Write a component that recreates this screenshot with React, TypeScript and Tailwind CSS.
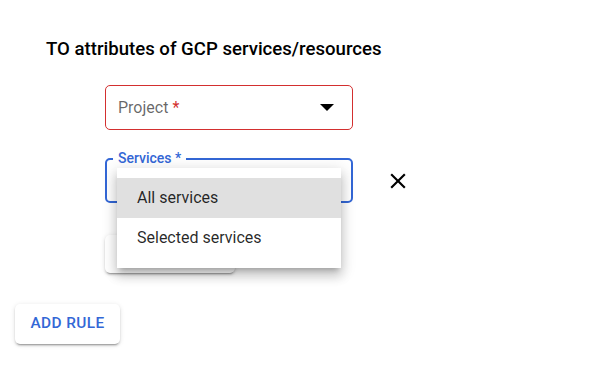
// Rule editor: GCP resource attributes with an open services dropdown
const App = () => {
  return (
    <div className="relative h-[377px] w-[595px] overflow-hidden bg-white font-['Roboto',sans-serif]">
      <div className="pl-[46px] pt-[37px]">
        <h2 className="text-[18.6px] font-medium leading-[25px] text-black">TO attributes of GCP services/resources</h2>
      </div>

      {/* Project select (error state) */}
      <div className="ml-[105px] mt-[23px] flex h-[45px] w-[248px] items-center justify-between rounded-[5px] border border-[#d32f2f] pl-[12px] pr-[18px]">
        <span className="text-[16px] leading-[24px] text-black/60">
          Project <span className="text-[#d32f2f]">*</span>
        </span>
        <svg viewBox="0 0 14 7" className="h-[7px] w-[14px] fill-black">
          <path d="M0 0h14L7 7z" />
        </svg>
      </div>

      {/* Services select (focused) */}
      <div className="ml-[105px] mt-[28px] flex items-center gap-[32px]">
        <div className="relative h-[45px] w-[248px] rounded-[5px] border-2 border-[#3367d6]">
          <span className="absolute left-[6px] top-[-10px] bg-white px-[5px] text-[14px] font-medium leading-[16px] text-[#3367d6]">
            Services *
          </span>
        </div>
        <svg viewBox="0 0 24 24" className="h-[26px] w-[26px] fill-black">
          <path d="M19 6.41 17.59 5 12 10.59 6.41 5 5 6.41 10.59 12 5 17.59 6.41 19 12 13.41 17.59 19 19 17.59 13.41 12z" />
        </svg>
      </div>

      {/* button mostly hidden under the menu */}
      <div className="ml-[105px] mt-[32px] h-[38px] w-[130px] rounded-[5px] bg-white shadow-[0_3px_1px_-2px_rgba(0,0,0,0.2),0_2px_2px_0_rgba(0,0,0,0.14),0_1px_5px_0_rgba(0,0,0,0.12)]" />

      <div className="ml-[15px] mt-[31px]">
        <button
          type="button"
          className="flex h-[40px] w-[105px] items-center justify-center rounded-[5px] bg-white text-[15.4px] font-medium uppercase tracking-[0.4px] text-[#3367d6] shadow-[0_3px_1px_-2px_rgba(0,0,0,0.2),0_2px_2px_0_rgba(0,0,0,0.14),0_1px_5px_0_rgba(0,0,0,0.12)]"
        >
          Add rule
        </button>
      </div>

      {/* open dropdown menu */}
      <ul className="absolute left-[117px] top-[168px] w-[224px] bg-white py-[10px] shadow-[0_5px_5px_-3px_rgba(0,0,0,0.2),0_8px_10px_1px_rgba(0,0,0,0.14),0_3px_14px_2px_rgba(0,0,0,0.12)]">
        <li className="flex h-[40px] items-center bg-[#e0e0e0] pl-[20px] text-[16px] text-black/85">All services</li>
        <li className="flex h-[40px] items-center pl-[20px] text-[16px] text-black/85">Selected services</li>
      </ul>
    </div>
  );
};

export default App;
